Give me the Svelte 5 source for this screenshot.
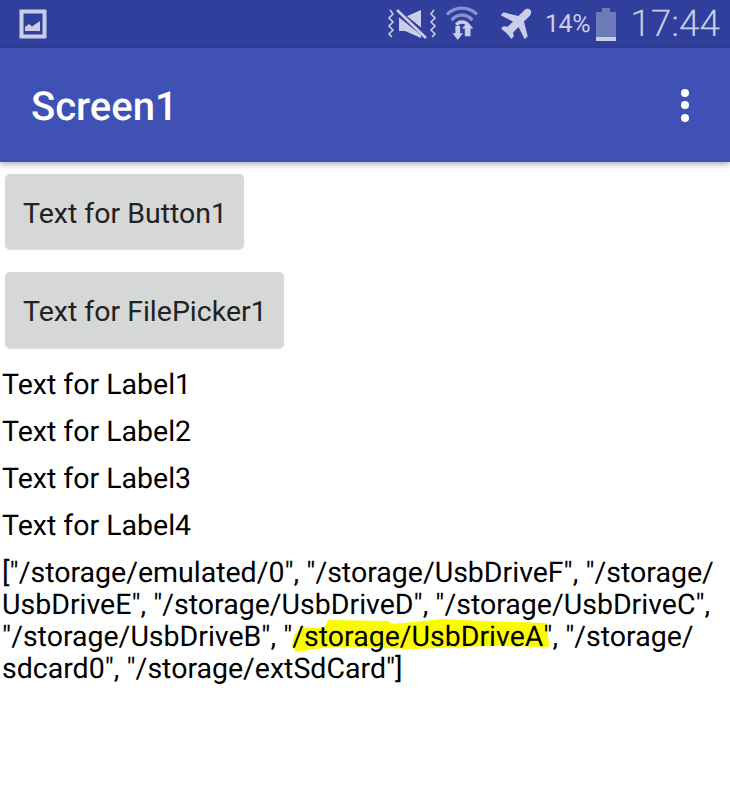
<script lang="ts">
  const labels = ['Text for Label1', 'Text for Label2', 'Text for Label3', 'Text for Label4'];
</script>

<div class="screen">
  <div class="status-bar">
    <svg class="gallery" width="28" height="30" viewBox="0 0 28 30">
      <rect x="2.5" y="2.5" width="23" height="25" fill="none" stroke="#c9cde8" stroke-width="4" />
      <path d="M6 22 L6 18 L10 15 L13 17.5 L21 12 L21 22 Z" fill="#c9cde8" />
    </svg>
    <div class="spacer"></div>
    <svg class="mute" width="50" height="34" viewBox="0 0 50 34">
      <path d="M3 3 L6 7 L2 11 L6 15 L2 19 L6 23 L2 27 L5 30" fill="none" stroke="#c9cde8" stroke-width="1.6" />
      <path d="M47 3 L44 7 L48 11 L44 15 L48 19 L44 23 L48 27 L45 30" fill="none" stroke="#c9cde8" stroke-width="1.6" />
      <path d="M12 10 L18 10 L34 3 L34 31 L18 24 L12 24 Z" fill="#c9cde8" />
      <path d="M10 5 L40 29" stroke="#303f9c" stroke-width="6" />
      <path d="M10 3 L39 31" stroke="#c9cde8" stroke-width="2.6" />
    </svg>
    <svg class="wifi" width="34" height="38" viewBox="0 0 36 38">
      <path d="M2 11 C11 2 25 2 34 11" fill="none" stroke="#8b93cd" stroke-width="3.5" />
      <path d="M7 17 C13 10 23 10 29 17" fill="none" stroke="#8b93cd" stroke-width="3.5" />
      <path d="M12 22 C15 18 21 18 24 22" fill="none" stroke="#c9cde8" stroke-width="3.5" />
      <path d="M11 23 L16 23 L16 31 L19 31 L13.5 38 L8 31 L11 31 Z" fill="#c9cde8" />
      <path d="M24 19 L30 26 L27 26 L27 34 L21 34 L21 26 L18 26 Z" fill="#c9cde8" />
    </svg>
    <svg class="plane" width="36" height="36" viewBox="0 0 24 24">
      <path d="M21.5 2.5 C20.5 1.5 18.5 1.8 17.2 3.1 L13.6 6.7 L3.8 4.2 L1.8 6.2 L10 10.3 L6.4 13.9 L3.6 13.5 L2 15 L5.8 18.2 L9 22 L10.5 20.4 L10.1 17.6 L13.7 14 L17.8 22.2 L19.8 20.2 L17.3 10.4 L20.9 6.8 C22.2 5.5 22.5 3.5 21.5 2.5 Z" fill="#c9cde8" />
    </svg>
    <span class="pct">14%</span>
    <div class="battery">
      <div class="cap"></div>
      <div class="cell"><div class="level"></div></div>
    </div>
    <span class="clock">17:44</span>
  </div>

  <header class="app-bar">
    <span class="title">Screen1</span>
    <div class="overflow"><i></i><i></i><i></i></div>
  </header>

  <main class="content">
    <button class="btn">Text for Button1</button>
    <button class="btn second">Text for FilePicker1</button>
    {#each labels as label}
      <div class="label">{label}</div>
    {/each}
    <div class="paths">
      ["/storage/emulated/0", "/storage/UsbDriveF", "/storage/<br />UsbDriveE", "/storage/UsbDriveD", "/storage/UsbDriveC",<br />"/storage/UsbDriveB", "<span class="marked"><svg class="marker" viewBox="0 0 256 34" preserveAspectRatio="none"><path d="M2 16 L10 8 L32 9 L36 1 L96 2 L100 5 L150 0 L190 2 L254 4 L256 28 L196 27 L120 30 L60 28 L30 29 L4 33 L0 26 Z" fill="#fcfc00" /></svg>/storage/UsbDriveA</span>", "/storage/<br />sdcard0", "/storage/extSdCard"]
    </div>
  </main>
</div>

<style>
  :global(body) {
    margin: 0;
    background: #fff;
  }
  .screen {
    width: 730px;
    height: 795px;
    overflow: hidden;
    font-family: Roboto, sans-serif;
    color: #000;
    text-rendering: geometricPrecision;
  }
  .status-bar {
    height: 48px;
    background: #303f9c;
    display: flex;
    align-items: center;
    padding: 0 10px 0 19px;
    box-sizing: border-box;
    color: #c9cde8;
  }
  .spacer {
    flex: 1;
  }
  .gallery {
    margin-top: -1px;
  }
  .wifi {
    margin-left: 8px;
    margin-top: -4px;
  }
  .plane {
    margin-left: 19px;
  }
  .pct {
    font-size: 25px;
    margin-left: 11px;
    letter-spacing: -0.4px;
  }
  .battery {
    margin-left: 6px;
    width: 20px;
    display: flex;
    flex-direction: column;
    align-items: center;
  }
  .cap {
    width: 8px;
    height: 4px;
    background: #6f7abb;
  }
  .cell {
    width: 20px;
    height: 29px;
    background: #6f7abb;
    display: flex;
    align-items: flex-end;
  }
  .level {
    width: 100%;
    height: 4px;
    background: #c9cde8;
  }
  .clock {
    font-size: 37px;
    font-weight: 300;
    margin-left: 14px;
  }
  .app-bar {
    height: 114px;
    background: #4051b5;
    display: flex;
    align-items: center;
    justify-content: space-between;
    padding: 0 41px 0 31px;
    box-shadow: 0 2px 6px rgba(0, 0, 0, 0.35);
    position: relative;
  }
  .title {
    color: #fff;
    font-size: 40px;
    font-weight: 500;
    padding-top: 3px;
  }
  .overflow {
    display: flex;
    flex-direction: column;
    gap: 4.5px;
  }
  .overflow i {
    width: 8px;
    height: 8px;
    border-radius: 50%;
    background: #fff;
  }
  .content {
    display: flex;
    flex-direction: column;
    align-items: flex-start;
    padding: 12px 0 0 0;
  }
  .btn {
    margin: 0 0 0 5px;
    height: 75px;
    padding: 3px 17px 0 18px;
    border: none;
    border-radius: 5px;
    background: #d6d7d7;
    box-shadow: 0 1px 1px rgba(0, 0, 0, 0.12);
    font-family: Roboto, sans-serif;
    font-size: 28.5px;
    color: #222;
  }
  .second {
    margin-top: 23px;
    height: 76px;
  }
  .label {
    font-size: 28.5px;
    line-height: 32px;
    margin-left: 2px;
    margin-top: 15px;
  }
  .second + .label {
    margin-top: 21px;
  }
  .paths {
    font-size: 28.5px;
    line-height: 32px;
    margin: 15px 0 0 2px;
    white-space: nowrap;
    isolation: isolate;
  }
  .marked {
    position: relative;
    display: inline-block;
  }
  .marker {
    position: absolute;
    z-index: -1;
    left: 0;
    top: -2px;
    width: calc(100% + 6px);
    height: 34px;
  }
</style>
